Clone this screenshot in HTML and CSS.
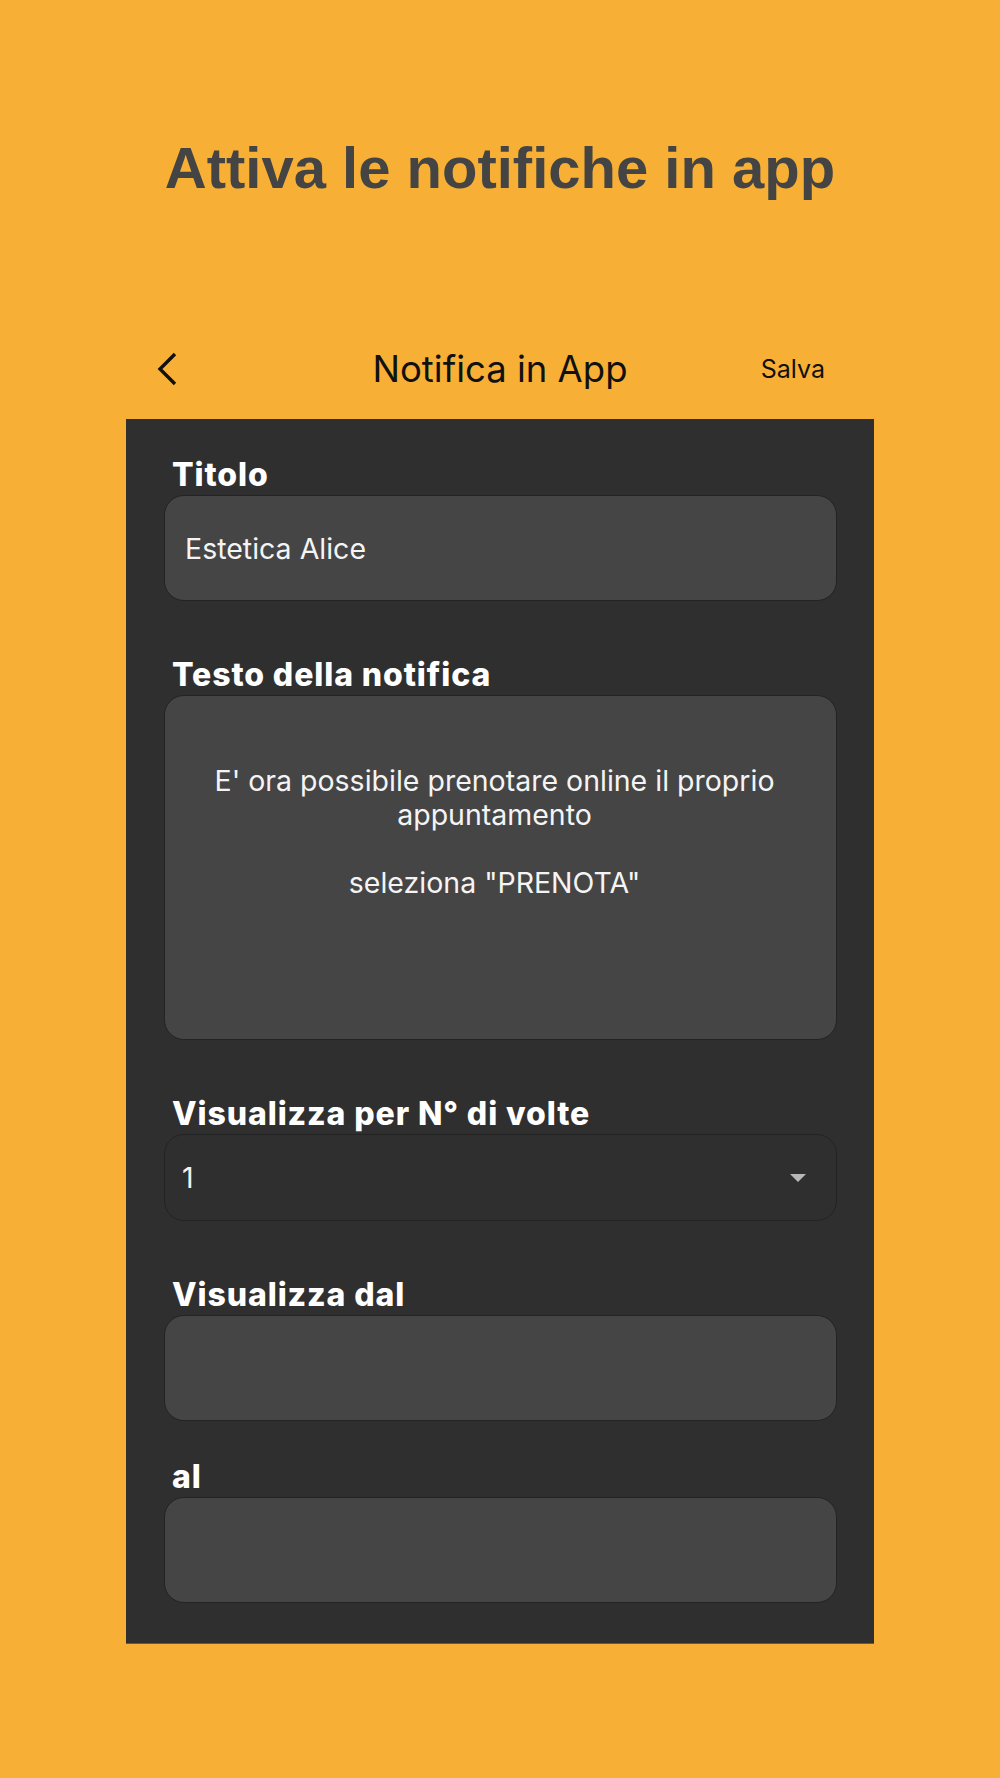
FILE: index.html
```html
<!DOCTYPE html>
<html lang="it">
<head>
  <meta charset="UTF-8" />
  <meta name="viewport" content="width=device-width, initial-scale=1.0" />
  <title>Attiva le notifiche in app</title>
  <link rel="stylesheet" href="styles.css">
</head>
<body>

<div class="hero">
  <h1>Attiva le notifiche in app</h1>
</div>

<div class="navbar">
  <div class="nav-back">
    <svg width="22" height="34" viewBox="0 0 22 34">
      <polyline points="19,2 4,17 19,32" fill="none" stroke="#111" stroke-width="3.4" />
    </svg>
  </div>
  <div class="nav-title">Notifica in App</div>
  <div class="nav-save">Salva</div>
</div>

<div class="panel">
  <div class="field">
    <div class="label">Titolo</div>
    <div class="box">Estetica Alice</div>
  </div>

  <div class="field">
    <div class="label">Testo della notifica</div>
    <div class="box textarea">E' ora possibile prenotare online il proprio<br>appuntamento<br><br>seleziona "PRENOTA"</div>
  </div>

  <div class="field">
    <div class="label">Visualizza per N° di volte</div>
    <div class="box select">
      <span>1</span>
      <span class="arrow"></span>
    </div>
  </div>

  <div class="field">
    <div class="label">Visualizza dal</div>
    <div class="box"></div>
  </div>

  <div class="field last">
    <div class="label">al</div>
    <div class="box"></div>
  </div>
</div>

</body>
</html>
```

FILE: styles.css
```css
body {
  margin: 0;
  background: #f7b035;
  font-family: Inter, "Noto Sans", sans-serif;
}
.hero {
  padding-top: 135px;
  height: 184px;
}
.hero h1 {
  margin: 0;
  text-align: center;
  font-family: "Liberation Sans", Arial, sans-serif;
  font-size: 58px;
  line-height: 66px;
  font-weight: bold;
  color: #444;
}
.navbar {
  width: 748px;
  height: 100px;
  margin: 0 auto;
  display: grid;
  grid-template-columns: 1fr auto 1fr;
  align-items: center;
}
.nav-back {
  padding-left: 30px;
  display: flex;
}
.nav-title {
  font-size: 36.5px;
  color: #111;
}
.nav-save {
  text-align: right;
  padding-right: 49px;
  font-size: 25px;
  color: #111;
}
.panel {
  width: 748px;
  margin: 0 auto;
  box-sizing: border-box;
  background: #2f2f2f;
  padding: 38px 37px 40px 38px;
  border-bottom: 1px solid #5a5a5a;
}
.field {
  margin-bottom: 56px;
}
.field.last {
  margin-bottom: 0;
}
.field:nth-child(4) {
  margin-bottom: 38px;
}
.label {
  color: #fff;
  font-size: 32px;
  line-height: 36px;
  font-weight: 800;
  letter-spacing: 0.9px;
  padding-left: 8px;
  margin-bottom: 2px;
}
.box {
  box-sizing: border-box;
  height: 106px;
  background: #454545;
  border: 1px solid #232323;
  border-radius: 20px;
  padding: 0 20px;
  display: flex;
  align-items: center;
  color: #f4f4f4;
  font-size: 28.5px;
}
.textarea {
  height: 345px;
  display: block;
  text-align: center;
  line-height: 34px;
  padding: 68px 32px 0 20px;
}
.select {
  height: 87px;
  background: #2f2f2f;
  padding: 0 30px 0 17px;
  justify-content: space-between;
}
.arrow {
  width: 0;
  height: 0;
  border-left: 8.5px solid transparent;
  border-right: 8.5px solid transparent;
  border-top: 8px solid #b8b8b8;
}
```
